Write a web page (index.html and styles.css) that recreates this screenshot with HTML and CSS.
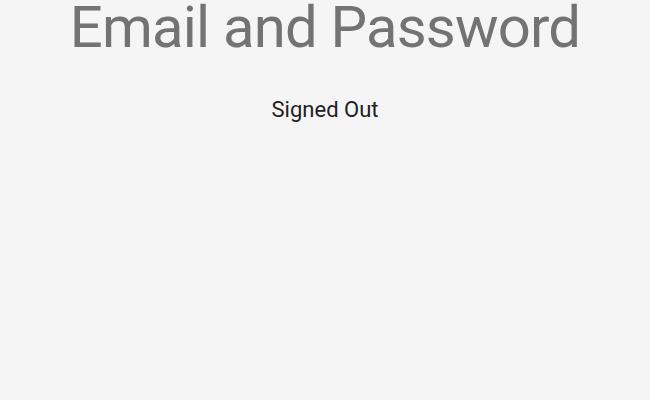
FILE: index.html
```html
<!DOCTYPE html>
<html>
<head>
<meta charset="utf-8">
<link rel="stylesheet" href="styles.css">
</head>
<body>
<main class="page">
  <h1 class="title">Email and Password</h1>
  <p class="status">Signed Out</p>
</main>
</body>
</html>
```
FILE: styles.css
```css
html, body {
  margin: 0;
  padding: 0;
  background: #f5f5f5;
  height: 100%;
}
.page {
  display: flex;
  flex-direction: column;
  align-items: center;
  font-family: Roboto, "Liberation Sans", sans-serif;
}
.title {
  margin: -3px 0 0 0;
  font-size: 58px;
  font-weight: 400;
  line-height: 60px;
  color: #737373;
  letter-spacing: -0.8px;
}
.status {
  margin: 39px 0 0 0;
  font-size: 22px;
  line-height: 28px;
  color: #212121;
  letter-spacing: 0;
}
```
